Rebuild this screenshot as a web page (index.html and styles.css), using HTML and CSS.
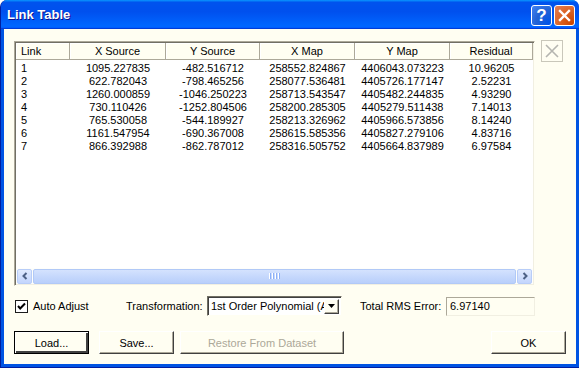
FILE: index.html
```html
<!DOCTYPE html>
<html>
<head>
  <title>Link Table</title>
  <link rel="stylesheet" href="styles.css">
</head>
<body>
  <div class="window">
    <div class="titlebar">
      <span class="title">Link Table</span>
      <div class="title-buttons">
        <button class="tb-btn tb-help">?</button>
        <button class="tb-btn tb-close">
          <svg width="13" height="13" viewBox="0 0 13 13"><path d="M2 2 L11 11 M11 2 L2 11" stroke="#fff" stroke-width="2.4" stroke-linecap="square"/></svg>
        </button>
      </div>
    </div>

    <div class="client">
      <div class="top-row">
        <div class="listbox">
          <div class="list-header">
            <div class="hcell left">Link</div>
            <div class="hcell">X Source</div>
            <div class="hcell">Y Source</div>
            <div class="hcell">X Map</div>
            <div class="hcell">Y Map</div>
            <div class="hcell">Residual</div>
          </div>
          <div class="list-body">
            <div class="row"><span class="left">1</span><span>1095.227835</span><span>-482.516712</span><span>258552.824867</span><span>4406043.073223</span><span>10.96205</span></div>
            <div class="row"><span class="left">2</span><span>622.782043</span><span>-798.465256</span><span>258077.536481</span><span>4405726.177147</span><span>2.52231</span></div>
            <div class="row"><span class="left">3</span><span>1260.000859</span><span>-1046.250223</span><span>258713.543547</span><span>4405482.244835</span><span>4.93290</span></div>
            <div class="row"><span class="left">4</span><span>730.110426</span><span>-1252.804506</span><span>258200.285305</span><span>4405279.511438</span><span>7.14013</span></div>
            <div class="row"><span class="left">5</span><span>765.530058</span><span>-544.189927</span><span>258213.326962</span><span>4405966.573856</span><span>8.14240</span></div>
            <div class="row"><span class="left">6</span><span>1161.547954</span><span>-690.367008</span><span>258615.585356</span><span>4405827.279106</span><span>4.83716</span></div>
            <div class="row"><span class="left">7</span><span>866.392988</span><span>-862.787012</span><span>258316.505752</span><span>4405664.837989</span><span>6.97584</span></div>
          </div>
          <div class="hscroll">
            <div class="sb-arrow">
              <svg width="8" height="8" viewBox="0 0 8 8"><path d="M5.5 1 L2.5 4 L5.5 7" fill="none" stroke="#4d6185" stroke-width="2"/></svg>
            </div>
            <div class="sb-thumb">
              <div class="grip"><i></i><i></i><i></i><i></i></div>
            </div>
            <div class="sb-arrow">
              <svg width="8" height="8" viewBox="0 0 8 8"><path d="M2.5 1 L5.5 4 L2.5 7" fill="none" stroke="#4d6185" stroke-width="2"/></svg>
            </div>
          </div>
        </div>
        <button class="del-btn" disabled>
          <svg width="16" height="16" viewBox="0 0 16 16"><path d="M2 2 L14 14 M14 2 L2 14" stroke="#b5b5b0" stroke-width="1.6"/></svg>
        </button>
      </div>

      <div class="options-row">
        <div class="check-group">
          <span class="checkbox">
            <svg width="11" height="11" viewBox="0 0 11 11"><path d="M2 5 L4.2 7.5 L9 2.5" fill="none" stroke="#000" stroke-width="2"/></svg>
          </span>
          <span>Auto Adjust</span>
        </div>
        <span class="label trans-label">Transformation:</span>
        <div class="select">
          <span class="select-text">1st Order Polynomial (Affine)</span>
          <span class="select-btn">
            <svg width="7" height="4" viewBox="0 0 7 4"><path d="M0 0 H7 L3.5 4 Z" fill="#000"/></svg>
          </span>
        </div>
        <span class="label rms-label">Total RMS Error:</span>
        <div class="textbox">6.97140</div>
      </div>

      <div class="buttons-row">
        <button class="btn default">Load...</button>
        <button class="btn save">Save...</button>
        <button class="btn restore" disabled>Restore From Dataset</button>
        <button class="btn ok">OK</button>
      </div>
    </div>
  </div>
</body>
</html>
```

FILE: styles.css
```css
body {
  margin: 0;
  font-family: "Liberation Sans", Arial, sans-serif;
  font-size: 11px;
  color: #000;
  background: #fff;
}

.window {
  width: 579px;
  height: 368px;
  box-sizing: border-box;
  display: flex;
  flex-direction: column;
  background: #0054e3;
  border-radius: 7px 7px 0 0;
  border-left: 1px solid #001ea0;
  border-bottom: 1px solid #001ea0;
  overflow: hidden;
}

.titlebar {
  height: 29px;
  flex: none;
  display: flex;
  align-items: center;
  padding-left: 6px;
  background: linear-gradient(180deg, #0997ff, #0053ee 8%, #0050ee 40%, #0066ff 88%, #0066ff 93%, #005bff 95%, #003dd7 96%, #003dd7);
}

.title {
  color: #fff;
  font-size: 13px;
  font-weight: bold;
  text-shadow: 1px 1px #0f1089;
  flex: 1;
}

.title-buttons {
  display: flex;
  gap: 2px;
  margin-right: 4px;
  margin-top: 1px;
}

.tb-btn {
  width: 21px;
  height: 21px;
  padding: 0;
  border: 1px solid #fff;
  border-radius: 3px;
  display: flex;
  align-items: center;
  justify-content: center;
  color: #fff;
  font-family: "Liberation Sans", Arial, sans-serif;
}

.tb-help {
  background: radial-gradient(circle at 90% 90%, #0054e9 0%, #2263d5 55%, #4484f5 100%);
  font-size: 17px;
  font-weight: bold;
  line-height: 1;
}

.tb-close {
  background: radial-gradient(circle at 90% 90%, #cc4600 0%, #dc6527 55%, #e5805a 100%);
}

.client {
  flex: 1;
  margin: 0 3px 3px 3px;
  background: #fffef2;
  padding: 12px 10px 0 10px;
  display: flex;
  flex-direction: column;
}

.top-row {
  display: flex;
  align-items: flex-start;
}

.listbox {
  width: 521px;
  height: 245px;
  box-sizing: border-box;
  border: 1px solid;
  border-color: #aca899 #fffef2 #fffef2 #aca899;
  box-shadow: inset 1px 1px 0 #716f64, inset -1px -1px 0 #f1efe2;
  padding: 1px;
  display: flex;
  flex-direction: column;
}

.list-header {
  display: grid;
  grid-template-columns: 54px 96px 94px 95px 95px 83px;
  height: 17px;
  flex: none;
}

.hcell {
  background: #fffef2;
  box-sizing: border-box;
  border-right: 1px solid #aca899;
  border-bottom: 1px solid #aca899;
  box-shadow: inset 1px 1px 0 #fff;
  text-align: center;
  line-height: 16px;
}

.hcell.left {
  text-align: left;
  padding-left: 5px;
}

.list-body {
  flex: 1;
  background: #fff;
  padding-top: 2px;
}

.row {
  display: grid;
  grid-template-columns: 54px 96px 94px 95px 95px 83px;
  height: 13px;
  line-height: 13px;
}

.row span {
  text-align: center;
  white-space: nowrap;
}

.row span.left {
  text-align: left;
  padding-left: 5px;
}

.hscroll {
  height: 16px;
  flex: none;
  display: flex;
  align-items: center;
  gap: 0;
  background: #fefefb;
  padding: 0 1px;
}

.sb-arrow {
  width: 15px;
  height: 15px;
  box-sizing: border-box;
  border: 1px solid #b8cdf8;
  border-radius: 2px;
  background: linear-gradient(180deg, #e0eafe, #c3d5fd);
  display: flex;
  align-items: center;
  justify-content: center;
}

.sb-thumb {
  flex: 1;
  height: 15px;
  box-sizing: border-box;
  margin: 0 1px;
  border: 1px solid #b1c9f7;
  border-radius: 2px;
  background: linear-gradient(180deg, #d4e2fe, #c3d6fc 60%, #b9cffb);
  display: flex;
  align-items: center;
  justify-content: center;
}

.grip {
  display: flex;
  gap: 1px;
  height: 6px;
}

.grip i {
  width: 1px;
  background: #fff;
  box-shadow: 1px 0 0 #8cb0f8;
  margin-right: 1px;
}

.del-btn {
  width: 22px;
  height: 22px;
  margin-left: 6px;
  margin-top: -1px;
  padding: 0;
  border: 1px solid #c9c7ba;
  background: #fffef2;
  display: flex;
  align-items: center;
  justify-content: center;
}

.options-row {
  display: flex;
  align-items: center;
  margin-top: 10px;
  height: 20px;
}

.check-group {
  width: 112px;
  display: flex;
  align-items: center;
  gap: 5px;
}

.checkbox {
  width: 13px;
  height: 13px;
  box-sizing: border-box;
  margin-left: 1px;
  border: 1px solid #1c1c1c;
  background: #fff;
  display: flex;
  align-items: center;
  justify-content: center;
}

.label {
  white-space: nowrap;
}

.trans-label {
  width: 81px;
}

.select {
  width: 135px;
  height: 20px;
  box-sizing: border-box;
  border: 1px solid;
  border-color: #716f64 #fffef2 #fffef2 #716f64;
  box-shadow: inset 1px 1px 0 #404040;
  background: #fff;
  display: flex;
  align-items: center;
  padding: 2px 2px 2px 3px;
}

.select-text {
  flex: 1;
  overflow: hidden;
  white-space: nowrap;
}

.select-btn {
  width: 15px;
  height: 15px;
  box-sizing: border-box;
  background: #fffef2;
  border: 1px solid;
  border-color: #fff #404040 #404040 #fff;
  box-shadow: inset -1px -1px 0 #aca899;
  display: flex;
  align-items: center;
  justify-content: center;
}

.rms-label {
  margin-left: 18px;
  width: 86px;
}

.textbox {
  width: 89px;
  height: 19px;
  box-sizing: border-box;
  border: 1px solid;
  border-color: #aca899 #f1efe2 #f1efe2 #aca899;
  padding-left: 3px;
  line-height: 17px;
  background: #fffef2;
}

.buttons-row {
  display: flex;
  margin-top: 15px;
}

.btn {
  width: 75px;
  height: 23px;
  padding: 0;
  font-family: "Liberation Sans", Arial, sans-serif;
  font-size: 11px;
  color: #000;
  background: #fffef2;
  border: 1px solid;
  border-color: #fff #404040 #404040 #fff;
  box-shadow: inset -1px -1px 0 #aca899;
}

.btn.default {
  border: 1px solid #000;
  box-shadow: inset 1px 1px 0 #fff, inset -2px -2px 0 #404040;
}

.btn.save {
  margin-left: 10px;
}

.btn.restore {
  width: 164px;
  margin-left: 6px;
  color: #aca899;
}

.btn.ok {
  margin-left: auto;
}
```
